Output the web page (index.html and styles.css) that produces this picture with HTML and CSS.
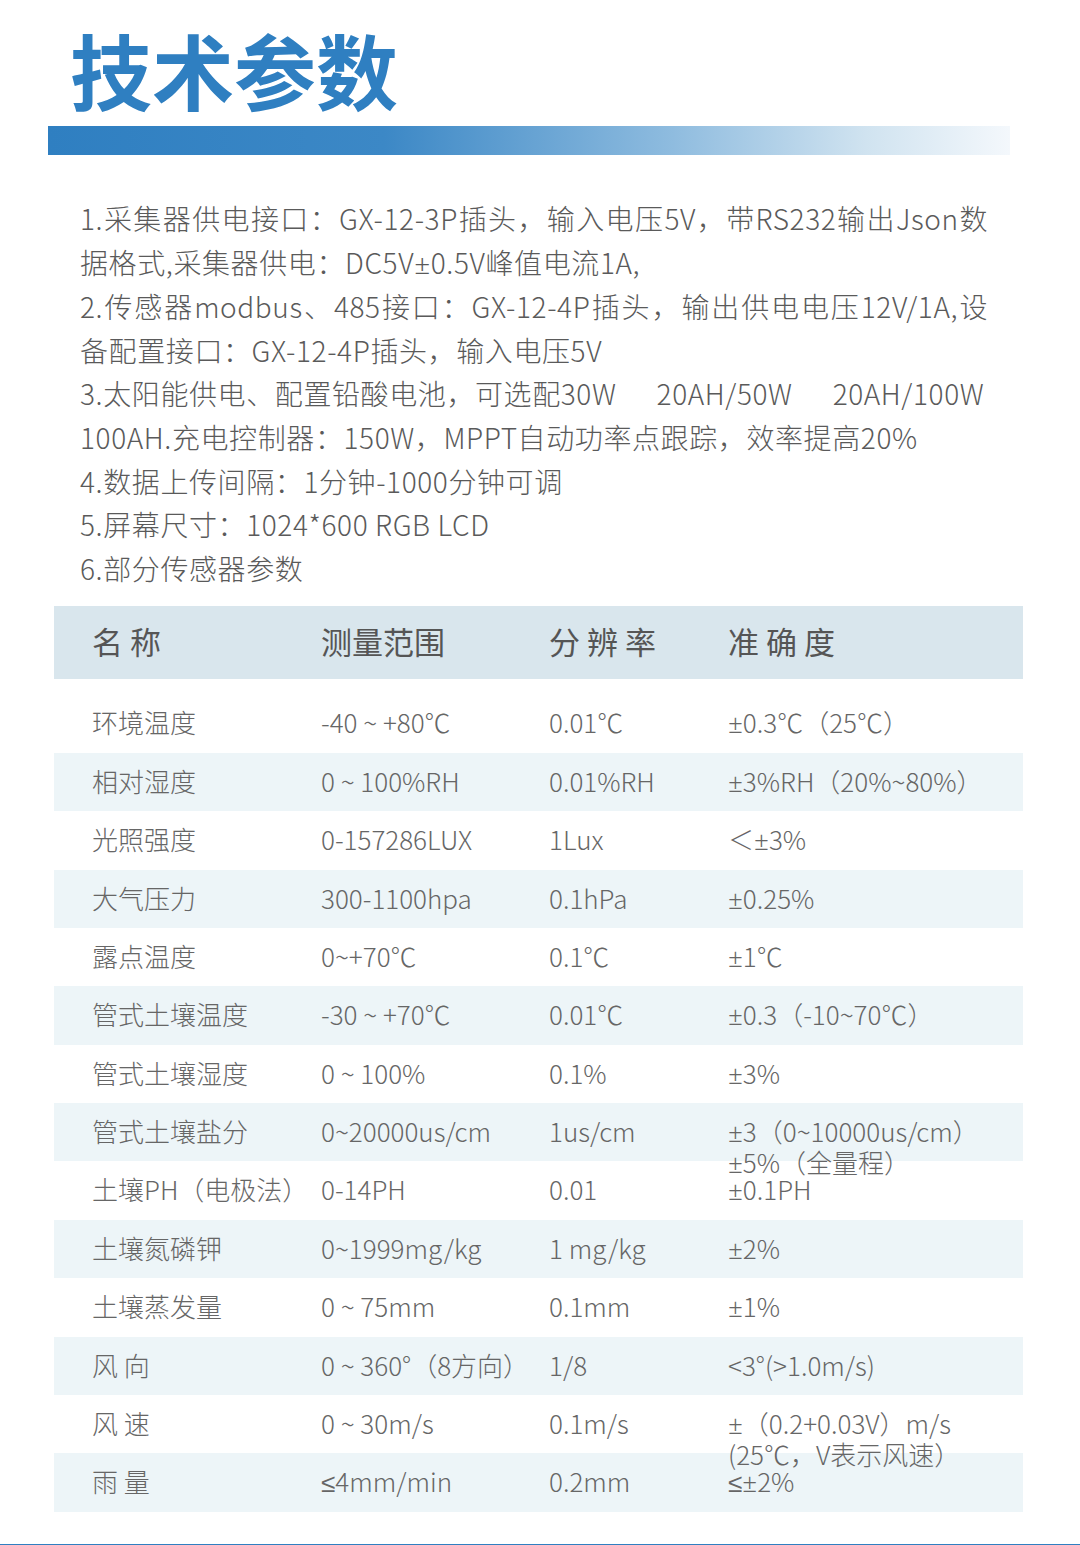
FILE: index.html
```html
<!DOCTYPE html>
<html lang="zh-CN">
<head>
  <meta charset="UTF-8" />
  <meta name="viewport" content="width=device-width, initial-scale=1.0" />
  <title>技术参数</title>
  <link rel="stylesheet" href="styles.css">
</head>
<body>

  <header class="page-head">
    <h1>技术参数</h1>
    <div class="head-bar"></div>
  </header>

  <!-- Spec list -->
  <section class="specs">
    <p><span class="line just">1.采集器供电接口：GX-12-3P插头，输入电压5V，带RS232输出Json数</span><span class="line">据格式,采集器供电：DC5V<span class="sym">±</span>0.5V峰值电流1A,</span></p>
    <p><span class="line just">2.传感器modbus、485接口：GX-12-4P插头，输出供电电压12V/1A,设</span><span class="line">备配置接口：GX-12-4P插头，输入电压5V</span></p>
    <p><span class="line">3.太阳能供电、配置铅酸电池，可选配30W<span class="gap"></span>20AH/50W<span class="gap"></span>20AH/100W</span><span class="line">100AH.充电控制器：150W，MPPT自动功率点跟踪，效率提高20%</span></p>
    <p><span class="line">4.数据上传间隔：1分钟-1000分钟可调</span></p>
    <p><span class="line">5.屏幕尺寸：1024*600 RGB LCD</span></p>
    <p><span class="line">6.部分传感器参数</span></p>
  </section>

  <!-- Sensor table -->
  <section class="sensor-table">
    <div class="row head">
      <div class="cell">名 称</div>
      <div class="cell">测量范围</div>
      <div class="cell">分 辨 率</div>
      <div class="cell">准 确 度</div>
    </div>
    <div class="rows">
      <div class="row">
        <div class="cell">环境温度</div>
        <div class="cell">-40 ~ +80℃</div>
        <div class="cell">0.01℃</div>
        <div class="cell"><span class="sym">±</span>0.3℃（25℃）</div>
      </div>
      <div class="row">
        <div class="cell">相对湿度</div>
        <div class="cell">0 ~ 100%RH</div>
        <div class="cell">0.01%RH</div>
        <div class="cell"><span class="sym">±</span>3%RH（20%~80%）</div>
      </div>
      <div class="row">
        <div class="cell">光照强度</div>
        <div class="cell">0-157286LUX</div>
        <div class="cell">1Lux</div>
        <div class="cell">＜<span class="sym">±</span>3%</div>
      </div>
      <div class="row">
        <div class="cell">大气压力</div>
        <div class="cell">300-1100hpa</div>
        <div class="cell">0.1hPa</div>
        <div class="cell"><span class="sym">±</span>0.25%</div>
      </div>
      <div class="row">
        <div class="cell">露点温度</div>
        <div class="cell">0~+70℃</div>
        <div class="cell">0.1℃</div>
        <div class="cell"><span class="sym">±</span>1℃</div>
      </div>
      <div class="row">
        <div class="cell">管式土壤温度</div>
        <div class="cell">-30 ~ +70℃</div>
        <div class="cell">0.01℃</div>
        <div class="cell"><span class="sym">±</span>0.3（-10~70℃）</div>
      </div>
      <div class="row">
        <div class="cell">管式土壤湿度</div>
        <div class="cell">0 ~ 100%</div>
        <div class="cell">0.1%</div>
        <div class="cell"><span class="sym">±</span>3%</div>
      </div>
      <div class="row">
        <div class="cell">管式土壤盐分</div>
        <div class="cell">0~20000us/cm</div>
        <div class="cell">1us/cm</div>
        <div class="cell"><span class="sym">±</span>3（0~10000us/cm）<br><span class="sym">±</span>5%（全量程）</div>
      </div>
      <div class="row">
        <div class="cell">土壤PH（电极法）</div>
        <div class="cell">0-14PH</div>
        <div class="cell">0.01</div>
        <div class="cell"><span class="sym">±</span>0.1PH</div>
      </div>
      <div class="row">
        <div class="cell">土壤氮磷钾</div>
        <div class="cell">0~1999mg/kg</div>
        <div class="cell">1 mg/kg</div>
        <div class="cell"><span class="sym">±</span>2%</div>
      </div>
      <div class="row">
        <div class="cell">土壤蒸发量</div>
        <div class="cell">0 ~ 75mm</div>
        <div class="cell">0.1mm</div>
        <div class="cell"><span class="sym">±</span>1%</div>
      </div>
      <div class="row">
        <div class="cell">风 向</div>
        <div class="cell">0 ~ 360°（8方向）</div>
        <div class="cell">1/8</div>
        <div class="cell">&lt;3°(&gt;1.0m/s)</div>
      </div>
      <div class="row">
        <div class="cell">风 速</div>
        <div class="cell">0 ~ 30m/s</div>
        <div class="cell">0.1m/s</div>
        <div class="cell"><span class="sym">±</span>（0.2+0.03V）m/s<br>(25℃，V表示风速）</div>
      </div>
      <div class="row">
        <div class="cell">雨 量</div>
        <div class="cell"><span class="sym">≤</span>4mm/min</div>
        <div class="cell">0.2mm</div>
        <div class="cell"><span class="sym">≤±</span>2%</div>
      </div>
    </div>
  </section>

  <div class="foot-line"></div>

</body>
</html>
```

FILE: styles.css
```css
body {
  margin: 0;
  font-family: "Noto Sans CJK SC", "Noto Sans", sans-serif;
  font-weight: 300;
  background-color: #ffffff;
  color: #5a5a5a;
}

/* Latin-width symbols (± ≤) */
.sym {
  font-family: "Noto Sans", "DejaVu Sans", sans-serif;
  font-weight: 300;
}

/* Title */
.page-head {
  padding-top: 28px;
}

.page-head h1 {
  margin: 0 0 0 70px;
  font-size: 82px;
  line-height: 82px;
  font-weight: 700;
  color: #2f7fc1;
}

.head-bar {
  margin: 16px 0 0 48px;
  width: 962px;
  height: 29px;
  background: linear-gradient(to right, #2f7fc1 0%, #3c88c6 35%, #8fbcdf 65%, #d0e3f0 85%, #f4f8fc 100%);
}

/* Spec list */
.specs {
  margin: 42px 0 0 80px;
  font-size: 28px;
  line-height: 43.6px;
  letter-spacing: 0.6px;
}

.specs p {
  margin: 0;
}

.specs .line {
  display: block;
  white-space: nowrap;
}

.specs .line.just {
  width: 908px;
  text-align: justify;
  text-align-last: justify;
}

.specs .gap {
  display: inline-block;
  width: 40px;
}

/* Sensor table */
.sensor-table {
  margin: 16px 0 0 54px;
  width: 969px;
  color: #666666;
}

.row {
  display: flex;
  height: 58.4px;
  padding-left: 38px;
  font-size: 26px;
  line-height: 29px;
}

.row .cell {
  padding-top: 13px;
  white-space: nowrap;
}

.row .cell:nth-child(1) { width: 229px; }
.row .cell:nth-child(2) { width: 228px; }
.row .cell:nth-child(3) { width: 179px; }
.row .cell:nth-child(4) { flex: 1; }

.row.head {
  height: 73px;
  background-color: #d9e6ed;
  color: #555555;
  font-size: 31px;
  font-weight: 400;
}

.row.head .cell {
  padding-top: 20px;
}

.rows {
  margin-top: 15px;
}

.rows .row:nth-child(even) {
  background-color: #edf5f8;
}

.foot-line {
  margin-top: 32px;
  height: 3px;
  background-color: #2f7fc1;
}
```
